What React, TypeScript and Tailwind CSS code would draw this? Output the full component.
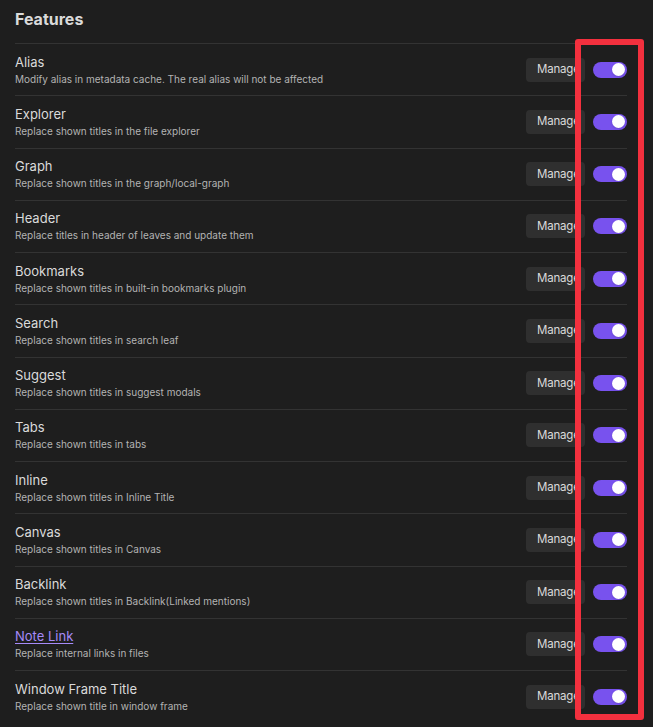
const features = [
  { name: "Alias", desc: "Modify alias in metadata cache. The real alias will not be affected" },
  { name: "Explorer", desc: "Replace shown titles in the file explorer" },
  { name: "Graph", desc: "Replace shown titles in the graph/local-graph" },
  { name: "Header", desc: "Replace titles in header of leaves and update them" },
  { name: "Bookmarks", desc: "Replace shown titles in built-in bookmarks plugin" },
  { name: "Search", desc: "Replace shown titles in search leaf" },
  { name: "Suggest", desc: "Replace shown titles in suggest modals" },
  { name: "Tabs", desc: "Replace shown titles in tabs" },
  { name: "Inline", desc: "Replace shown titles in Inline Title" },
  { name: "Canvas", desc: "Replace shown titles in Canvas" },
  { name: "Backlink", desc: "Replace shown titles in Backlink(Linked mentions)" },
  { name: "Note Link", desc: "Replace internal links in files", link: true },
  { name: "Window Frame Title", desc: "Replace shown title in window frame" },
];

function Toggle() {
  return (
    <div className="relative h-4 w-[34px] shrink-0 rounded-full bg-[#7852ee]">
      <div className="absolute right-[2px] top-[1.5px] h-[13px] w-[13px] rounded-full bg-white shadow-sm" />
    </div>
  );
}

export default function App() {
  return (
    <div className="relative h-[727px] w-[653px] overflow-hidden bg-[#1e1e1e] pl-[15px] font-['Inter',sans-serif]">
      <div className="w-[612px]">
        <h3 className="flex h-[43px] items-center pb-[5px] text-[16px] font-bold text-[#dadada]">Features</h3>

        {features.map((f) => (
          <div key={f.name} className="flex h-[52.25px] items-center border-t border-[#333333]">
            <div className="min-w-0 flex-1">
              <div
                className={
                  f.link
                    ? "text-[13px] leading-[18px] text-[#a68af9] underline underline-offset-2"
                    : "text-[13px] leading-[18px] text-[#dadada]"
                }
              >
                {f.name}
              </div>
              <div className="mt-[1px] text-[10px] leading-[15px] text-[#b3b3b3]">{f.desc}</div>
            </div>
            <div className="flex items-center gap-2">
              <button className="h-6 w-[59px] rounded-[4px] bg-[#2f2f2f] pl-[11px] text-left text-[11.5px] tracking-[-0.2px] text-[#dadada]">
                Manage
              </button>
              <Toggle />
            </div>
          </div>
        ))}
      </div>

      {/* red highlight box over the toggles */}
      <div className="pointer-events-none absolute left-[575px] top-[39px] h-[681px] w-[69px] rounded-[3px] border-[6px] border-[#f3303e]" />
    </div>
  );
}
